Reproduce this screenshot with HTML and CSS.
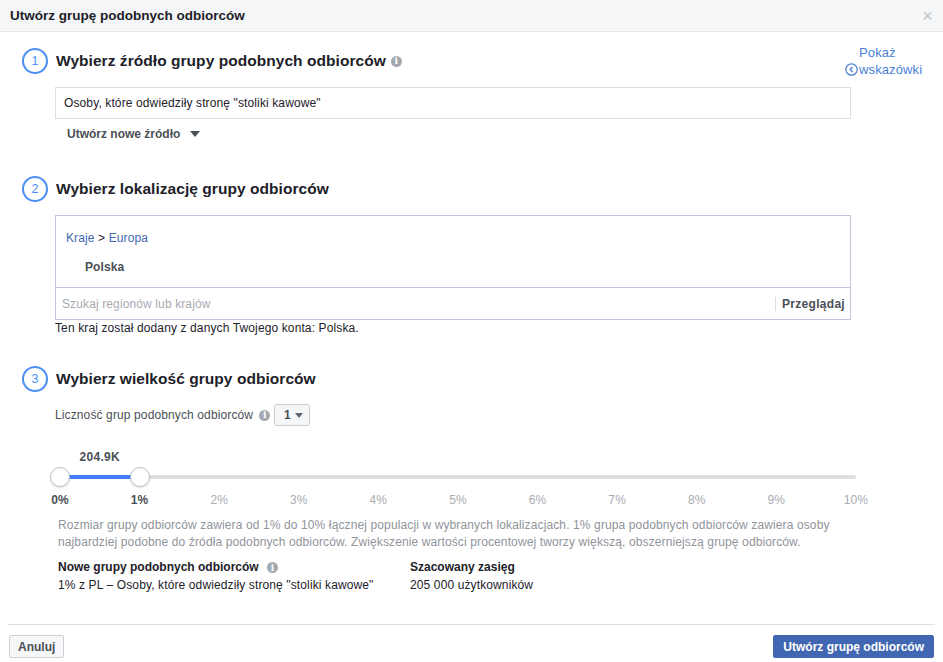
FILE: index.html
```html
<!DOCTYPE html>
<html lang="pl">
<head>
    <meta charset="UTF-8">
    <title>Utwórz grupę podobnych odbiorców</title>
    <link rel="stylesheet" href="styles.css">
</head>
<body>
    <div class="dialog">
        <header class="dialog-header">
            <h1>Utwórz grupę podobnych odbiorców</h1>
            <span class="close">&times;</span>
        </header>

        <div class="dialog-body">
            <!-- Step 1 -->
            <section class="step step-one">
                <div class="step-head">
                    <span class="step-num">1</span>
                    <h2>Wybierz źródło grupy podobnych odbiorców</h2>
                    <span class="info">i</span>
                    <a class="hints" href="#">
                        <span class="hints-top">Pokaż</span>
                        <span class="hints-bottom">
                            <svg width="13" height="13" viewBox="0 0 13 13"><circle cx="6.5" cy="6.5" r="5.7" fill="none" stroke="#4a7fd6" stroke-width="1.2"/><path d="M7.6 4 L5.2 6.5 L7.6 9" fill="none" stroke="#4a7fd6" stroke-width="1.3"/></svg>wskazówki
                        </span>
                    </a>
                </div>
                <div class="step-content">
                    <div class="source-input">Osoby, które odwiedziły stronę "stoliki kawowe"</div>
                    <div class="new-source">Utwórz nowe źródło <span class="caret"></span></div>
                </div>
            </section>

            <!-- Step 2 -->
            <section class="step step-two">
                <div class="step-head">
                    <span class="step-num">2</span>
                    <h2>Wybierz lokalizację grupy odbiorców</h2>
                </div>
                <div class="step-content">
                    <div class="location-box">
                        <div class="location-list">
                            <div class="crumbs"><a href="#">Kraje</a> &gt; <a href="#">Europa</a></div>
                            <div class="country">Polska</div>
                        </div>
                        <div class="location-search">
                            <span class="placeholder">Szukaj regionów lub krajów</span>
                            <span class="browse">Przeglądaj</span>
                        </div>
                    </div>
                    <p class="note">Ten kraj został dodany z danych Twojego konta: Polska.</p>
                </div>
            </section>

            <!-- Step 3 -->
            <section class="step step-three">
                <div class="step-head">
                    <span class="step-num">3</span>
                    <h2>Wybierz wielkość grupy odbiorców</h2>
                </div>
                <div class="step-content">
                    <div class="count-row">
                        <span>Liczność grup podobnych odbiorców</span>
                        <span class="info">i</span>
                        <span class="select">1 <span class="caret small"></span></span>
                    </div>

                    <div class="slider">
                        <div class="slider-value">204.9K</div>
                        <div class="track">
                            <div class="track-fill"></div>
                            <span class="handle handle-start"></span>
                            <span class="handle handle-end"></span>
                        </div>
                        <div class="ticks">
                            <span class="active">0%</span>
                            <span class="active">1%</span>
                            <span>2%</span>
                            <span>3%</span>
                            <span>4%</span>
                            <span>5%</span>
                            <span>6%</span>
                            <span>7%</span>
                            <span>8%</span>
                            <span>9%</span>
                            <span>10%</span>
                        </div>
                    </div>

                    <p class="description">Rozmiar grupy odbiorców zawiera od 1% do 10% łącznej populacji w wybranych lokalizacjach. 1% grupa podobnych odbiorców zawiera osoby najbardziej podobne do źródła podobnych odbiorców. Zwiększenie wartości procentowej tworzy większą, obszerniejszą grupę odbiorców.</p>

                    <div class="summary">
                        <div class="summary-col wide">
                            <div class="summary-title">Nowe grupy podobnych odbiorców <span class="info">i</span></div>
                            <div>1% z PL – Osoby, które odwiedziły stronę "stoliki kawowe"</div>
                        </div>
                        <div class="summary-col">
                            <div class="summary-title">Szacowany zasięg</div>
                            <div>205 000 użytkowników</div>
                        </div>
                    </div>
                </div>
            </section>
        </div>

        <footer class="dialog-footer">
            <button class="btn">Anuluj</button>
            <button class="btn btn-primary">Utwórz grupę odbiorców</button>
        </footer>
    </div>
</body>
</html>
```

FILE: styles.css
```css
body {
    margin: 0;
    font-family: "Liberation Sans", Arial, sans-serif;
    font-size: 12px;
    letter-spacing: 0.12px;
    color: #1d2129;
    background: #ffffff;
}

.dialog {
    width: 943px;
    height: 662px;
    display: flex;
    flex-direction: column;
}

/* Header */
.dialog-header {
    height: 32px;
    box-sizing: border-box;
    display: flex;
    align-items: center;
    justify-content: space-between;
    padding: 0 10px;
    background: #f5f6f7;
    border-bottom: 1px solid #e5e5e5;
}

.dialog-header h1 {
    margin: 0;
    font-size: 13.5px;
    font-weight: bold;
    letter-spacing: 0;
    color: #1d2129;
}

.close {
    color: #bec2c9;
    font-size: 18px;
    line-height: 1;
}

/* Body */
.dialog-body {
    flex: 1;
    padding: 16px 18px 0 22px;
}

.step-head {
    display: flex;
    align-items: center;
    height: 26px;
}

.step-num {
    width: 22px;
    height: 22px;
    border: 2px solid #4a90f5;
    border-radius: 50%;
    display: flex;
    align-items: center;
    justify-content: center;
    color: #4a90f5;
    font-size: 12.5px;
    margin-right: 8px;
    flex-shrink: 0;
}

.step-head h2 {
    margin: 0;
    font-size: 15.5px;
    font-weight: bold;
    letter-spacing: 0.05px;
    color: #1d2129;
}

.info {
    display: inline-flex;
    align-items: center;
    justify-content: center;
    width: 11px;
    height: 11px;
    border-radius: 50%;
    background: #a4a8af;
    color: #ffffff;
    font-size: 9px;
    font-weight: bold;
    font-family: "DejaVu Serif", serif;
    letter-spacing: 0;
    margin-left: 5px;
    vertical-align: middle;
}

.hints {
    margin-left: auto;
    width: 80px;
    align-self: flex-start;
    margin-top: -4px;
    text-decoration: none;
    color: #4a7fd6;
    font-size: 13px;
    line-height: 17px;
}

.hints span {
    display: block;
}

.hints-top {
    padding-left: 14px;
}

.hints-bottom svg {
    vertical-align: -2px;
    margin-right: 1px;
}

.step-content {
    margin-left: 33px;
    width: 796px;
}

/* Step 1 */
.source-input {
    margin-top: 13px;
    height: 32px;
    box-sizing: border-box;
    border: 1px solid #dddfe2;
    padding: 0 8px;
    display: flex;
    align-items: center;
    color: #1d2129;
}

.new-source {
    margin-top: 7px;
    padding-left: 12px;
    font-weight: bold;
    letter-spacing: 0;
    color: #4b4f56;
    line-height: 16px;
}

.caret {
    display: inline-block;
    width: 0;
    height: 0;
    border-left: 5px solid transparent;
    border-right: 5px solid transparent;
    border-top: 6px solid #4b4f56;
    margin-left: 6px;
    vertical-align: 1px;
}

.caret.small {
    border-left-width: 4px;
    border-right-width: 4px;
    border-top-width: 5px;
    margin-left: 4px;
    border-top-color: #606770;
}

/* Step 2 */
.step-two {
    margin-top: 34px;
}

.location-box {
    margin-top: 13px;
    border: 1px solid #bdc7d8;
}

.location-list {
    height: 72px;
    box-sizing: border-box;
    padding: 14px 10px 0;
    border-bottom: 1px solid #bdc7d8;
}

.crumbs {
    line-height: 16px;
    color: #1d2129;
}

.crumbs a {
    color: #4267b2;
    text-decoration: none;
}

.country {
    margin-top: 13px;
    padding-left: 19px;
    font-weight: bold;
    color: #4b4f56;
    line-height: 16px;
}

.location-search {
    height: 30px;
    display: flex;
    align-items: center;
    justify-content: space-between;
    padding: 1px 5px 0 6px;
}

.placeholder {
    color: #a7abb1;
}

.browse {
    font-weight: bold;
    letter-spacing: 0.3px;
    color: #4b4f56;
    border-left: 1px solid #dddfe2;
    padding-left: 6px;
    line-height: 14px;
}

.note {
    margin: 0;
    line-height: 16px;
    color: #1d2129;
}

/* Step 3 */
.step-three {
    margin-top: 30px;
}

.count-row {
    margin-top: 12px;
    display: flex;
    align-items: center;
    color: #4b4f56;
}

.count-row .info {
    margin-left: 6px;
    margin-right: 4px;
}

.select {
    height: 22px;
    width: 36px;
    box-sizing: border-box;
    border: 1px solid #ccd0d5;
    border-radius: 2px;
    background: #f5f6f7;
    padding: 0 0 0 9px;
    display: flex;
    align-items: center;
    font-weight: bold;
    color: #4b4f56;
}

.slider {
    margin: 23px 0 0 -10px;
    width: 826px;
    padding: 0 15px;
    box-sizing: border-box;
}

.slider-value {
    margin-left: 5%;
    width: 0;
    display: flex;
    justify-content: center;
    font-weight: bold;
    letter-spacing: 0.3px;
    color: #4b4f56;
    line-height: 16px;
    white-space: nowrap;
}

.track {
    position: relative;
    height: 4px;
    margin-top: 10px;
    background: #dddfe2;
    border-radius: 2px;
}

.track-fill {
    width: 10%;
    height: 100%;
    background: #4080ff;
}

.handle {
    position: absolute;
    top: -8px;
    width: 18px;
    height: 18px;
    margin-left: -10px;
    border-radius: 50%;
    background: #ffffff;
    border: 1px solid #bec2c9;
    box-shadow: 0 1px 2px rgba(0, 0, 0, 0.15);
}

.handle-start {
    left: 0;
}

.handle-end {
    left: 10%;
}

.ticks {
    display: flex;
    justify-content: space-between;
    margin: 13px -15px 0;
}

.ticks span {
    width: 30px;
    text-align: center;
    color: #a7abb1;
    line-height: 16px;
}

.ticks .active {
    color: #4b4f56;
    font-weight: bold;
}

.description {
    margin: 9px 0 0 3px;
    line-height: 17px;
    color: #90949c;
}

.summary {
    margin: 7px 0 0 3px;
    display: flex;
    line-height: 18px;
    color: #1d2129;
}

.summary-col.wide {
    width: 352px;
}

.summary-title {
    font-weight: bold;
    letter-spacing: 0;
}

/* Footer */
.dialog-footer {
    margin: 0 8px;
    padding: 10px 0 4px;
    border-top: 1px solid #dddfe2;
    display: flex;
    justify-content: space-between;
}

.btn {
    height: 23px;
    padding: 0 8px;
    font-family: "Liberation Sans", Arial, sans-serif;
    font-size: 12px;
    font-weight: bold;
    color: #4b4f56;
    background: #f6f7f9;
    border: 1px solid #ced0d4;
    border-radius: 2px;
    margin-left: 1px;
}

.btn-primary {
    background: #4267b2;
    border-color: #4267b2;
    color: #ffffff;
    padding: 0 9px;
    margin-right: 1px;
}
```
